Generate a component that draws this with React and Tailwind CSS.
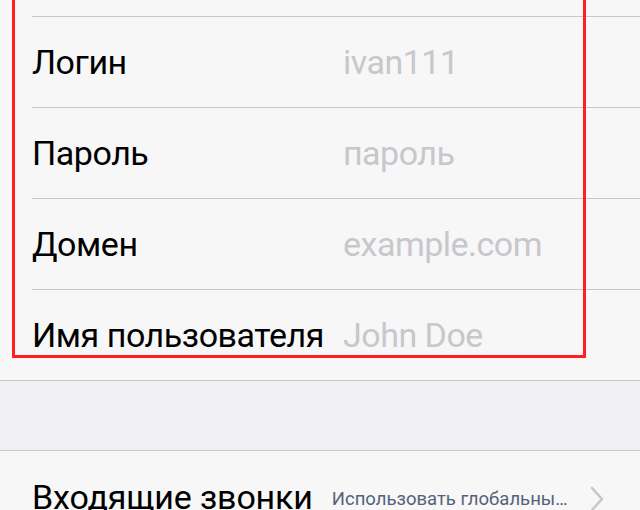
const rows = [
  { label: "Логин", value: "ivan111" },
  { label: "Пароль", value: "пароль" },
  { label: "Домен", value: "example.com" },
  { label: "Имя пользователя", value: "John Doe" },
];

function Chevron() {
  return (
    <svg width="14" height="26" viewBox="0 0 14 26" fill="none">
      <path d="M2 2 L12 13 L2 24" stroke="#c7c7cc" strokeWidth="2.6" strokeLinecap="round" strokeLinejoin="round" />
    </svg>
  );
}

export default function App() {
  return (
    <div className="relative w-[640px] h-[510px] overflow-hidden bg-[#f7f7f7] font-['Roboto',sans-serif]">
      {/* account group */}
      <div className="pt-4 border-b border-[#c8c7cc]">
        {rows.map((r) => (
          <div key={r.label} className="ml-8 h-[91px] border-t border-[#c8c7cc] flex items-center">
            <div className="w-[311px] shrink-0 text-[34px] tracking-[-0.45px] text-black leading-none">{r.label}</div>
            <div className="text-[34px] tracking-[-0.5px] text-[#c7c7cc] leading-none">{r.value}</div>
          </div>
        ))}
      </div>

      {/* section gap */}
      <div className="h-[70px] bg-[#efeff4] border-b border-[#c8c7cc]" />

      {/* calls row */}
      <div className="h-[91px] pl-8 pr-[36px] flex items-center">
        <div className="shrink-0 text-[34px] tracking-[-0.15px] text-black leading-none">Входящие звонки</div>
        <div className="ml-[19px] flex-1 min-w-0 truncate text-[18.5px] text-[#54627a] leading-none pt-[6px]">
          Использовать глобальные настройки
        </div>
        <div className="ml-[20px] shrink-0 pt-[4px]">
          <Chevron />
        </div>
      </div>

      {/* highlight box */}
      <div className="absolute left-[12px] top-[-10px] w-[574px] h-[368px] border-[3px] border-[#ff1f1f]" />
    </div>
  );
}
